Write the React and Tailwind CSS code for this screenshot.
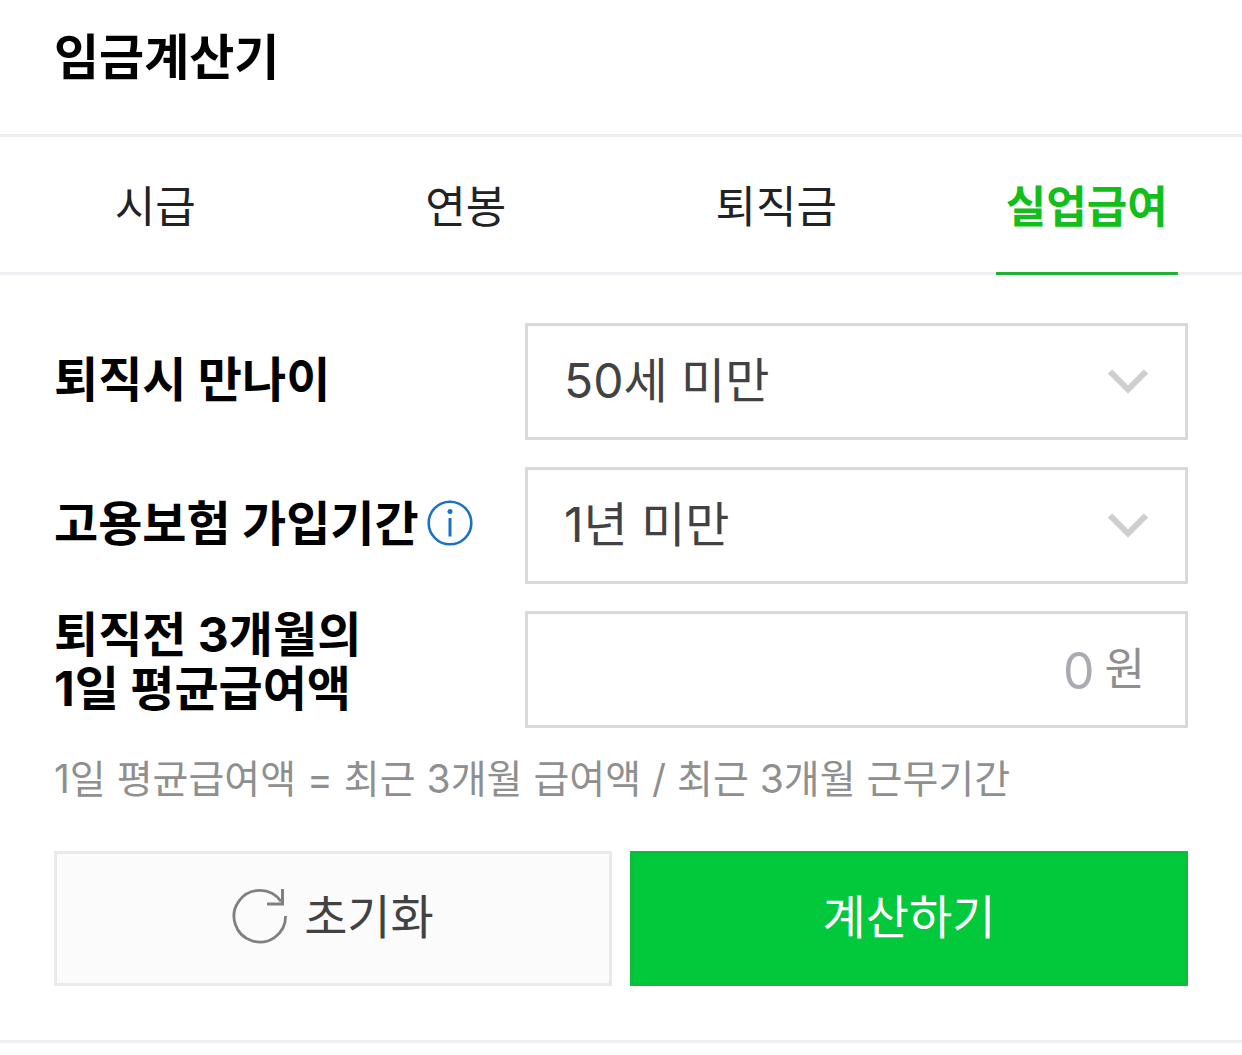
import React, { useState } from "react";

const tabs = ["시급", "연봉", "퇴직금", "실업급여"];

function Chevron() {
  return (
    <svg className="pointer-events-none absolute top-1/2 right-10 h-6 w-10 -translate-y-1/2" viewBox="0 0 40 24" fill="none" stroke="#cdced0" strokeWidth="6" aria-hidden="true">
      <path d="M2 1.5L20 19.5L38 1.5" />
    </svg>
  );
}

function SelectBox({ id, options }) {
  return (
    <div className="relative">
      <select id={id} className="block h-[117px] w-full appearance-none border-3 border-[#d9d9d9] bg-white pr-20 pb-0.5 pl-9 text-[48px] text-[#424242] outline-none">
        {options.map((o) => <option key={o}>{o}</option>)}
      </select>
      <Chevron />
    </div>
  );
}

export default function App() {
  const [active, setActive] = useState("실업급여");
  const [pay, setPay] = useState("");
  const label = "text-[48px] leading-[54px] font-bold whitespace-nowrap";
  return (
    <main className="bg-white font-[Inter,'Noto_Sans_CJK_KR',sans-serif] text-black">
      <header className="border-b-3 border-[#eceef1] px-[54px] pt-[22px] pb-10">
        <h1 className="text-[49px] leading-[72px] font-bold">임금계산기</h1>
      </header>
      <nav className="flex h-[138px] border-b-3 border-[#eceef1]">
        {tabs.map((t) => (
          <div key={t} className="-mb-[3px] flex flex-1 justify-center">
            <button type="button" onClick={() => setActive(t)} className={t === active ? "border-b-3 border-[#22b033] px-[10px] pt-1 text-[44px] font-bold text-[#12be1a]" : "border-b-3 border-transparent px-[10px] pt-1 text-[44px] text-[#222222]"}>{t}</button>
          </div>
        ))}
      </nav>
      <form className="border-b-3 border-[#eceef1] px-[54px] pt-12 pb-[54px]" onSubmit={(e) => e.preventDefault()}>
        <div className="grid grid-cols-[471px_1fr] items-center gap-y-[27px]">
          <label htmlFor="age" className={`${label} pb-1`}>퇴직시 만나이</label>
          <SelectBox id="age" options={["50세 미만", "50세 이상"]} />
          <div className="flex items-center gap-2 pb-1">
            <label htmlFor="term" className={label}>고용보험 가입기간</label>
            <button type="button" aria-label="도움말" className="pb-0.5">
              <svg className="block size-[46px]" viewBox="0 0 46 46" fill="none" stroke="#1d71c4" strokeWidth="2.6">
                <circle cx="23" cy="23" r="21.3" />
                <path d="M23 18V36.5" strokeWidth="3" />
                <circle cx="23" cy="11.5" r="2.5" fill="#1d71c4" stroke="none" />
              </svg>
            </button>
          </div>
          <SelectBox id="term" options={["1년 미만", "1년 이상"]} />
          <label htmlFor="pay" className={`${label} -my-2 pb-4`}>퇴직전 3개월의<br />1일 평균급여액</label>
          <div className="flex h-[117px] items-center border-3 border-[#d9d9d9] pr-10 text-[44px] text-[#8f8f8f]">
            <input id="pay" value={pay} onChange={(e) => setPay(e.target.value)} placeholder="0" className="w-0 flex-1 pt-1 pr-2.5 text-right text-[50px] outline-none placeholder:text-[#a9abb0]" />
            <span className="pb-0.5">원</span>
          </div>
        </div>
        <p className="mt-6 text-[39px] leading-[54px] text-[#8f8f8f]">1일 평균급여액 = 최근 3개월 급여액 / 최근 3개월 근무기간</p>
        <div className="mt-[45px] grid grid-cols-2 gap-[18px]">
          <button type="reset" onClick={() => setPay("")} className="flex h-[135px] items-center justify-center gap-4 border-3 border-[#e9e9e9] bg-[#fbfbfb] pb-0.5 text-[47px] text-[#424242]">
            <svg className="mb-1 size-14" viewBox="0 0 56 56" fill="none" stroke="#808080" strokeWidth="2.8" aria-hidden="true">
              <path d="M53.6 28A25.8 25.8 0 1 1 49 13.5" />
              <path d="M50.5 1V16H35" strokeWidth="3" />
            </svg>
            초기화
          </button>
          <button type="submit" className="h-[135px] border-3 border-[#0cbd3a] bg-[#02c83c] pb-0.5 text-[47px] text-white">계산하기</button>
        </div>
      </form>
    </main>
  );
}
